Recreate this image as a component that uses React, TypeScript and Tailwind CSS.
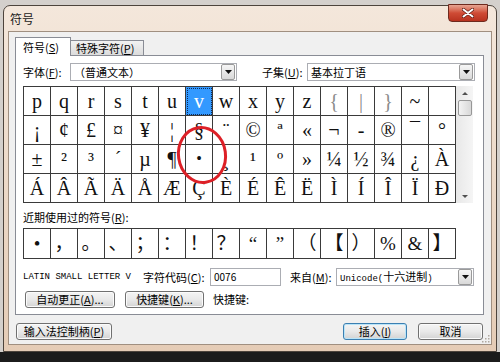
import type { ReactNode } from "react";

const grid: string[][] = [
  ["p", "q", "r", "s", "t", "u", "v", "w", "x", "y", "z", "{", "|", "}", "~", ""],
  ["¡", "¢", "£", "¤", "¥", "¦", "§", "¨", "©", "ª", "«", "¬", "-", "®", "¯", "°"],
  ["±", "²", "³", "´", "µ", "¶", "·", "¸", "¹", "º", "»", "¼", "½", "¾", "¿", "À"],
  ["Á", "Â", "Ã", "Ä", "Å", "Æ", "Ç", "È", "É", "Ê", "Ë", "Ì", "Í", "Î", "Ï", "Ð"],
];

const recent = ["•", "，", "。", "、", "；", "：", "！", "？", "“", "”", "（", "【", "）", "%", "&", "】"];

const faint = ["{", "|", "}"];

function Btn({ children, className = "", primary = false }: { children: ReactNode; className?: string; primary?: boolean }) {
  return (
    <div
      className={`h-[17px] flex items-center justify-center rounded-[3px] border bg-gradient-to-b from-[#f4f4f4] via-[#e9e9e9] to-[#d3d3d3] leading-none ${
        primary ? "border-[#3c7fb1] shadow-[inset_0_0_0_1px_#b9e4f8]" : "border-[#707070] shadow-[inset_0_0_0_1px_#fbfbfb]"
      } ${className}`}
    >
      {children}
    </div>
  );
}

function DropArrow() {
  return (
    <div className="w-[14px] h-[16px] mr-px flex items-center justify-center rounded-[2px] border border-[#9a9a9a] bg-gradient-to-b from-[#f6f6f6] to-[#d9d9d9]">
      <svg width="7" height="4" viewBox="0 0 7 4">
        <path d="M0 0h7L3.5 4z" fill="#111" />
      </svg>
    </div>
  );
}

function Combo({ children, className = "" }: { children: ReactNode; className?: string }) {
  return (
    <div className={`h-[18px] flex items-center border border-[#abadb3] bg-white ${className}`}>
      <span className="flex-1 pl-[3px] leading-none">{children}</span>
      <DropArrow />
    </div>
  );
}

function Key({ k }: { k: string }) {
  return (
    <>
      (<span className="underline">{k}</span>)
    </>
  );
}

export default function App() {
  return (
    <div className="relative w-[500px] h-[362px] overflow-hidden bg-[#d4d0cc] flex flex-col font-['Noto_Sans_CJK_SC',sans-serif] text-[11px] text-black">
      <div className="mt-[5px] mx-[3px] h-[347px] rounded-t-[7px] border border-[#4d443c] bg-gradient-to-b from-[#f4e7db] to-[#e5ccb6] flex flex-col">
        {/* title bar */}
        <div className="h-[25px] flex items-start justify-between pl-[6px] pr-[8px]">
          <span className="pt-[6px] text-[12px] leading-[14px] text-[#1b1b1b]">符号</span>
          <div className="-mt-[2px] w-[40px] h-[18px] rounded-b-[4px] border border-[#6e2a1e] bg-gradient-to-b from-[#e6a492] via-[#cf4b35] to-[#b8321f] flex items-center justify-center">
            <svg width="12" height="10" viewBox="0 0 12 10">
              <path d="M1.5 1.5L10.5 8.5M10.5 1.5L1.5 8.5" stroke="#5a1d14" strokeWidth="3.4" strokeLinecap="round" />
              <path d="M1.5 1.5L10.5 8.5M10.5 1.5L1.5 8.5" stroke="#fff" strokeWidth="2" strokeLinecap="round" />
            </svg>
          </div>
        </div>

        {/* body */}
        <div className="flex-1 px-[4px] pb-[6px] flex">
          <div className="relative flex-1 border border-[#a08f80] bg-[#f0f0f0] pt-[5px] pb-[4px] pl-[6px] pr-[7px] flex flex-col">
            {/* tabs */}
            <div className="h-[18px] flex items-end">
              <div className="relative z-10 w-[56px] h-[19px] -mb-px border border-b-0 border-[#898c95] bg-white pl-[7px] pt-[2px] leading-[14px] text-[11px]">
                符号<Key k="S" />
              </div>
              <div className="w-[73px] h-[15px] border border-l-0 border-b-0 border-[#898c95] bg-gradient-to-b from-[#f2f2f2] to-[#dcdcdc] pl-[5px] leading-[14px]">
                特殊字符<Key k="P" />
              </div>
            </div>

            {/* tab panel */}
            <div className="h-[260px] border border-[#898c95] bg-white pt-[7px] pl-[7px] pr-[7px] pb-[6px] flex flex-col">
              <div className="h-[18px] flex items-center">
                <span className="w-[47px] leading-none">
                  字体<Key k="F" />:
                </span>
                <Combo className="w-[167px]">（普通文本）</Combo>
                <span className="ml-[25px] w-[45px] leading-none">
                  子集<Key k="U" />:
                </span>
                <Combo className="w-[168px]">基本拉丁语</Combo>
              </div>

              {/* symbol grid */}
              <div className="mt-[5px] flex">
                <div className="border-l border-t border-[#3a3a3a] grid grid-cols-[repeat(16,27px)] font-['Liberation_Serif',serif] text-[20px]">
                  {grid.flatMap((row, r) =>
                    row.map((ch, c) => {
                      const sel = r === 0 && c === 6;
                      const dot = r === 2 && c === 6;
                      return (
                        <div
                          key={`${r}-${c}`}
                          className={`h-[29px] border-r border-b border-[#3a3a3a] flex items-center justify-center leading-none ${
                            sel
                              ? "bg-[#3399ff] text-white outline-1 outline-dotted outline-[#0d2a55] -outline-offset-2"
                              : faint.includes(ch) && r === 0
                                ? "text-[#8a8a8a]"
                                : "text-[#111]"
                          }`}
                        >
                          {dot ? <span className="text-[16px]">•</span> : ch}
                        </div>
                      );
                    })
                  )}
                </div>
                <div className="w-[17px] h-[117px] bg-gradient-to-r from-[#e8e8e8] to-[#f5f5f5] flex flex-col items-center">
                  <div className="h-[14px] flex items-center justify-center">
                    <svg width="6" height="3" viewBox="0 0 6 3">
                      <path d="M0 3L3 0L6 3z" fill="#505050" />
                    </svg>
                  </div>
                  <div className="w-[14px] h-[16px] rounded-[2px] border border-[#979797] bg-gradient-to-r from-[#f3f3f3] to-[#d8d8d8]" />
                  <div className="flex-1" />
                  <div className="h-[14px] flex items-center justify-center">
                    <svg width="6" height="3" viewBox="0 0 6 3">
                      <path d="M0 0L6 0L3 3z" fill="#505050" />
                    </svg>
                  </div>
                </div>
              </div>

              <div className="mt-[7px] h-[14px] leading-[14px]">
                近期使用过的符号<Key k="R" />:
              </div>

              {/* recently used */}
              <div className="mt-[4px] flex">
                <div className="border-l border-t border-[#3a3a3a] grid grid-cols-[repeat(16,27px)] font-['Liberation_Serif','Noto_Sans_CJK_SC',serif] text-[19px]">
                  {recent.map((ch, i) => (
                    <div key={i} className="h-[30px] border-r border-b border-[#3a3a3a] flex items-center justify-center leading-none text-[#111]">
                      {ch}
                    </div>
                  ))}
                </div>
              </div>

              {/* char info row */}
              <div className="mt-[9px] h-[18px] flex items-center">
                <span className="w-[120px] font-['Liberation_Mono',monospace] text-[9px] leading-none">LATIN SMALL LETTER V</span>
                <span className="w-[67px] leading-none">
                  字符代码<Key k="C" />:
                </span>
                <div className="w-[71px] h-[18px] border border-[#abadb3] bg-white flex items-center pl-[3px] text-[10px] leading-none">0076</div>
                <span className="ml-[9px] w-[46px] leading-none">
                  来自<Key k="M" />:
                </span>
                <Combo className="w-[138px]">
                  <span className="font-['Liberation_Mono',monospace] text-[9px]">Unicode(</span>
                  十六进制
                  <span className="font-['Liberation_Mono',monospace] text-[9px]">)</span>
                </Combo>
              </div>

              {/* shortcut row */}
              <div className="mt-[5px] h-[17px] flex items-center">
                <Btn className="ml-[2px] w-[90px]">
                  自动更正<Key k="A" />...
                </Btn>
                <Btn className="ml-[10px] w-[79px]">
                  快捷键<Key k="K" />...
                </Btn>
                <span className="ml-[9px] leading-none">快捷键:</span>
              </div>
            </div>

            {/* bottom buttons */}
            <div className="mt-[8px] flex items-center">
              <Btn className="ml-px w-[96px]">
                输入法控制柄<Key k="P" />
              </Btn>
              <div className="flex-1" />
              <Btn primary className="w-[64px]">
                插入<Key k="I" />
              </Btn>
              <Btn className="ml-[11px] mr-px w-[65px]">取消</Btn>
            </div>

            {/* size grip */}
            <svg className="absolute right-[1px] bottom-[1px]" width="9" height="9" viewBox="0 0 9 9">
              <g fill="#b0a89f">
                <rect x="7" y="1" width="1.5" height="1.5" />
                <rect x="4" y="4" width="1.5" height="1.5" />
                <rect x="7" y="4" width="1.5" height="1.5" />
                <rect x="1" y="7" width="1.5" height="1.5" />
                <rect x="4" y="7" width="1.5" height="1.5" />
                <rect x="7" y="7" width="1.5" height="1.5" />
              </g>
            </svg>
          </div>
        </div>
      </div>
      <div className="flex-1 bg-[#1c1c1c]" />

      {/* red annotation ring */}
      <svg className="absolute left-[174px] top-[124px]" width="56" height="62" viewBox="0 0 56 62">
        <ellipse cx="28" cy="31" rx="23.5" ry="27.5" transform="rotate(-8 28 31)" fill="none" stroke="#dd2027" strokeWidth="3" />
      </svg>
    </div>
  );
}
